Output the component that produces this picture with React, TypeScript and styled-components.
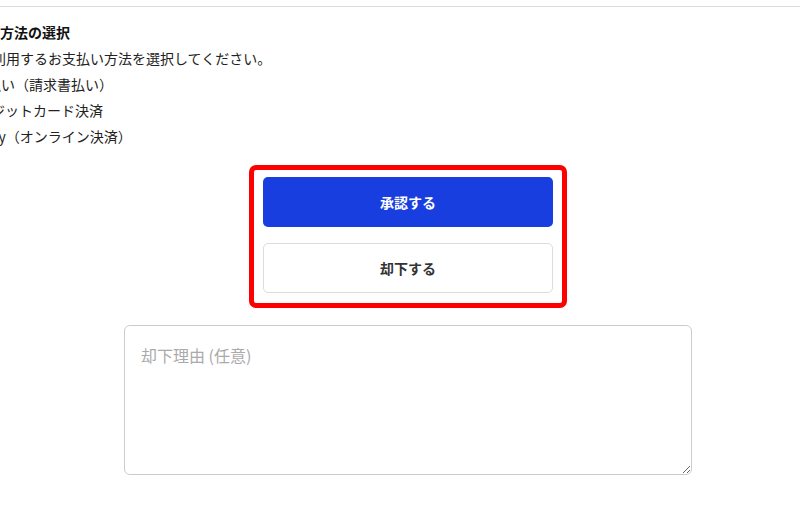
import styled, { createGlobalStyle } from "styled-components";

const GlobalStyle = createGlobalStyle`
  * {
    box-sizing: border-box;
  }
  body {
    margin: 0;
    background: #ffffff;
    font-family: "Noto Sans CJK JP", "Noto Sans", sans-serif;
    color: #222222;
  }
`;

// Payment options (left part is scrolled out of view in the capture)
const PAYMENT_OPTIONS = [
  { id: "invoice", label: "後払い（請求書払い）", indent: 29 },
  { id: "card", label: "クレジットカード決済", indent: 19 },
  { id: "paypay", label: "PayPay（オンライン決済）", indent: 15 },
];

const App = () => {
  return (
    <>
      <GlobalStyle />
      <PageStyled>
        <Divider />
        <PaymentSection>
          <SectionTitle>お支払い方法の選択</SectionTitle>
          <SectionText $indent={34}>
            ご利用するお支払い方法を選択してください。
          </SectionText>
          {PAYMENT_OPTIONS.map((option) => (
            <OptionRow key={option.id} $indent={option.indent}>
              {option.label}
            </OptionRow>
          ))}
        </PaymentSection>
        <ActionArea>
          <HighlightBox>
            <ButtonStack>
              <ActionButton $variant="primary">承認する</ActionButton>
              <ActionButton $variant="secondary">却下する</ActionButton>
            </ButtonStack>
          </HighlightBox>
          <ReasonInput placeholder="却下理由 (任意)" />
        </ActionArea>
      </PageStyled>
    </>
  );
};

export default App;

const PageStyled = styled.div`
  width: 800px;
  height: 508px;
  overflow: hidden;
  padding-top: 6px;
  display: flex;
  flex-direction: column;
`;

const Divider = styled.div`
  width: 100%;
  border-top: 1px solid #dddddd;
`;

const PaymentSection = styled.div`
  display: flex;
  flex-direction: column;
  margin-left: -56px;
  padding-top: 12px;
  white-space: nowrap;
`;

const SectionTitle = styled.div`
  font-size: 14px;
  font-weight: 700;
  line-height: 26px;
  color: #111111;
`;

const SectionText = styled.div<{ $indent: number }>`
  font-size: 14px;
  line-height: 26px;
  padding-left: ${({ $indent }) => $indent}px;
`;

const OptionRow = styled.div<{ $indent: number }>`
  font-size: 14px;
  line-height: 26px;
  padding-left: ${({ $indent }) => $indent}px;
`;

const ActionArea = styled.div`
  display: flex;
  flex-direction: column;
  align-items: center;
  padding-left: 16px;
  margin-top: 16px;
`;

const HighlightBox = styled.div`
  border: 5px solid #ff0000;
  border-radius: 7px;
  padding: 7px 9px 10px 9px;
`;

const ButtonStack = styled.div`
  display: flex;
  flex-direction: column;
  gap: 16px;
  width: 290px;
`;

const ActionButton = styled.button<{ $variant: "primary" | "secondary" }>`
  height: 50px;
  width: 100%;
  border-radius: 5px;
  font-family: "Noto Sans CJK JP", "Noto Sans", sans-serif;
  font-size: 14px;
  font-weight: 700;
  cursor: pointer;
  background-color: ${({ $variant }) =>
    $variant === "primary" ? "#183edf" : "#ffffff"};
  color: ${({ $variant }) => ($variant === "primary" ? "#ffffff" : "#333333")};
  border: ${({ $variant }) =>
    $variant === "primary" ? "none" : "1px solid #dcdcdc"};
`;

const ReasonInput = styled.textarea`
  margin-top: 17px;
  width: 568px;
  height: 150px;
  padding: 16px;
  border: 1px solid #cccccc;
  border-radius: 6px;
  font-family: "Noto Sans CJK JP", "Noto Sans", sans-serif;
  font-size: 16px;
  line-height: 1.7;
  color: #222222;
  resize: vertical;
  outline: none;

  &::placeholder {
    color: #aaaaaa;
  }
`;
